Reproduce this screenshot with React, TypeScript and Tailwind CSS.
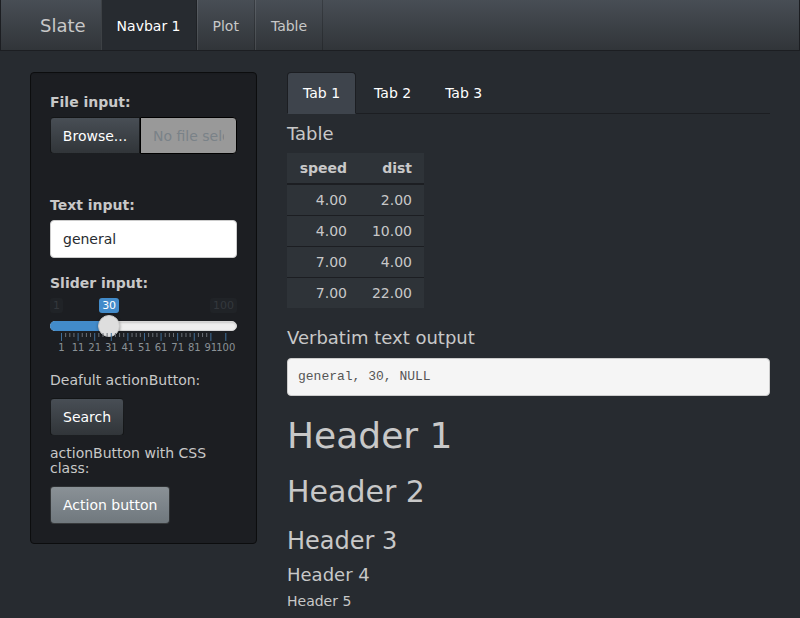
import React from "react";

const font = "font-['DejaVu_Sans',sans-serif]";

const rows = [
  ["4.00", "2.00"],
  ["4.00", "10.00"],
  ["7.00", "4.00"],
  ["7.00", "22.00"],
];

const tickX = (v: number) => 11 + (v - 1) * (164.3 / 99);

const majors = [1, 11, 21, 31, 41, 51, 61, 71, 81, 91, 100];

const SliderInput = () => {
  const minors: number[] = [];
  for (let i = 0; i < 9; i++) {
    for (let j = 1; j < 4; j++) minors.push(1 + i * 10 + j * 2.5);
  }
  const handle = tickX(30);
  return (
    <div className="relative h-[62px] w-[187px]">
      <span className="absolute left-0 top-[5px] rounded-[3px] bg-[#202327] px-[3px] text-[11px] leading-[15px] text-[#34383d]">
        1
      </span>
      <span className="absolute right-0 top-[5px] rounded-[3px] bg-[#202327] px-[3px] text-[11px] leading-[15px] text-[#34383d]">
        100
      </span>
      <span
        className="absolute top-[5px] -translate-x-1/2 rounded-[3px] bg-[#428bca] px-[3px] text-[11px] leading-[15px] text-white"
        style={{ left: handle }}
      >
        30
      </span>
      <div className="absolute left-0 right-0 top-[28px] h-[10px] rounded-full border border-[#d6d6d6] bg-[#eeeeee] shadow-[inset_0_1px_2px_rgba(0,0,0,0.15)]" />
      <div
        className="absolute left-0 top-[28px] h-[10px] rounded-l-full bg-[#428bca]"
        style={{ width: handle }}
      />
      <div
        className="absolute top-[22px] h-[22px] w-[22px] -translate-x-1/2 rounded-full border border-[#c8c8c8] bg-[#dedede] shadow-[0_1px_3px_rgba(0,0,0,0.4)]"
        style={{ left: handle }}
      />
      <svg className="absolute left-0 top-[40px]" width="187" height="9">
        {minors.map((v) => (
          <line key={v} x1={tickX(v) + 0.5} x2={tickX(v) + 0.5} y1="0" y2="4" stroke="#6b7076" strokeWidth="1" />
        ))}
        {majors.map((v) => (
          <line key={v} x1={tickX(v) + 0.5} x2={tickX(v) + 0.5} y1="0" y2="8" stroke="#3f6e99" strokeWidth="1" />
        ))}
      </svg>
      {majors.map((v) => (
        <span
          key={v}
          className="absolute top-[49px] -translate-x-1/2 text-[10px] leading-[12px] text-[#8a9196]"
          style={{ left: tickX(v) + 0.5 }}
        >
          {v}
        </span>
      ))}
    </div>
  );
};

export default function App() {
  return (
    <div className={`${font} min-h-[618px] bg-[#272b30] text-[14px] leading-[20px] text-[#c8c8c8]`}>
      <nav className="flex h-[51px] border border-t-0 border-[#1c1e22] bg-[linear-gradient(#484e55,#3a3f44_60%,#313539)] pl-[24px]">
        <a className="px-[15px] pt-[16px] text-[18px] leading-[20px] text-[#c8c8c8]">Slate</a>
        <ul className="flex">
          <li className="border-x border-l-[rgba(255,255,255,0.1)] border-r-[rgba(0,0,0,0.2)] bg-[#272b30] px-[15px] pt-[16px] text-white">
            Navbar 1
          </li>
          <li className="border-x border-l-[rgba(255,255,255,0.1)] border-r-[rgba(0,0,0,0.2)] px-[15px] pt-[16px] text-[#c8c8c8]">
            Plot
          </li>
          <li className="border-x border-l-[rgba(255,255,255,0.1)] border-r-[rgba(0,0,0,0.2)] px-[15px] pt-[16px] text-[#c8c8c8]">
            Table
          </li>
        </ul>
      </nav>

      <div className="flex items-start gap-[30px] px-[30px] pt-[21px]">
        <aside className="w-[227px] shrink-0 rounded-[4px] border border-[#0c0d0e] bg-[#1c1e22] p-[19px] shadow-[inset_0_1px_1px_rgba(0,0,0,0.05)]">
          <label className="mb-[5px] block font-bold">File input:</label>
          <div className="flex h-[37px]">
            <span className="flex w-[90px] items-center justify-center rounded-l-[4px] border border-[rgba(0,0,0,0.6)] bg-[linear-gradient(#484e55,#3a3f44_60%,#313539)] text-white">
              Browse...
            </span>
            <span className="flex min-w-0 flex-1 items-center rounded-r-[4px] border border-black bg-[#999999] px-[12px] text-[#7a8288]">
              <span className="overflow-hidden whitespace-nowrap">No file selected</span>
            </span>
          </div>

          <label className="mb-[5px] mt-[41px] block font-bold">Text input:</label>
          <div className="flex h-[38px] items-center rounded-[4px] border border-[#cccccc] bg-white px-[12px] text-[#272b30]">
            general
          </div>

          <label className="mb-0 mt-[15px] block font-bold">Slider input:</label>
          <SliderInput />

          <p className="mb-[8px] mt-[15px]">Deafult actionButton:</p>
          <button className="h-[38px] rounded-[4px] border border-[rgba(0,0,0,0.6)] bg-[linear-gradient(#484e55,#3a3f44_60%,#313539)] px-[12px] text-white">
            Search
          </button>

          <p className="mb-[10px] mt-[10px] leading-[15px]">actionButton with CSS class:</p>
          <button className="h-[38px] rounded-[4px] border border-[rgba(0,0,0,0.6)] bg-[linear-gradient(#8a9196,#7a8288_60%,#70787d)] px-[12px] text-white">
            Action button
          </button>
        </aside>

        <main className="min-w-0 flex-1">
          <ul className="flex h-[42px] border-b border-[#1c1e22]">
            <li className="mr-[2px] h-[42px] rounded-t-[4px] border border-[#1c1e22] border-b-transparent bg-[#3e444c] px-[15px] py-[10px] text-white">
              Tab 1
            </li>
            <li className="mr-[2px] h-[42px] border border-transparent px-[15px] py-[10px] text-white">Tab 2</li>
            <li className="mr-[2px] h-[42px] border border-transparent px-[15px] py-[10px] text-white">Tab 3</li>
          </ul>

          <h4 className="mb-[9px] mt-[10px] text-[18px] leading-[1.1]">Table</h4>
          <table className="mb-[20px] border-collapse bg-[#2e3338]">
            <thead>
              <tr className="border-b-2 border-[#1c1e22]">
                <th className="w-[72px] pl-[12px] pr-[12px] py-[5px] text-right font-bold">speed</th>
                <th className="w-[65px] pl-[12px] pr-[12px] py-[5px] text-right font-bold">dist</th>
              </tr>
            </thead>
            <tbody>
              {rows.map((r, i) => (
                <tr key={i} className={i > 0 ? "border-t border-[#1c1e22]" : ""}>
                  <td className="px-[12px] py-[5px] text-right">{r[0]}</td>
                  <td className="px-[12px] py-[5px] text-right">{r[1]}</td>
                </tr>
              ))}
            </tbody>
          </table>

          <h4 className="mb-[10px] mt-[10px] text-[18px] leading-[1.1]">Verbatim text output</h4>
          <pre className="mb-[10px] rounded-[4px] border border-[#cccccc] bg-[#f5f5f5] px-[10px] py-[9px] font-['Liberation_Mono',monospace] text-[13px] leading-[18px] text-[#555555]">
            general, 30, NULL
          </pre>

          <h1 className="mb-[10px] mt-[20px] text-[36px] leading-[1.1]">Header 1</h1>
          <h2 className="mb-[10px] mt-[20px] text-[30px] leading-[1.1]">Header 2</h2>
          <h3 className="mb-[10px] mt-[20px] text-[24px] leading-[1.1]">Header 3</h3>
          <h4 className="mb-[10px] mt-[10px] text-[18px] leading-[1.1]">Header 4</h4>
          <h5 className="mb-[10px] mt-[9px] text-[14px] leading-[1.1]">Header 5</h5>
        </main>
      </div>
    </div>
  );
}
